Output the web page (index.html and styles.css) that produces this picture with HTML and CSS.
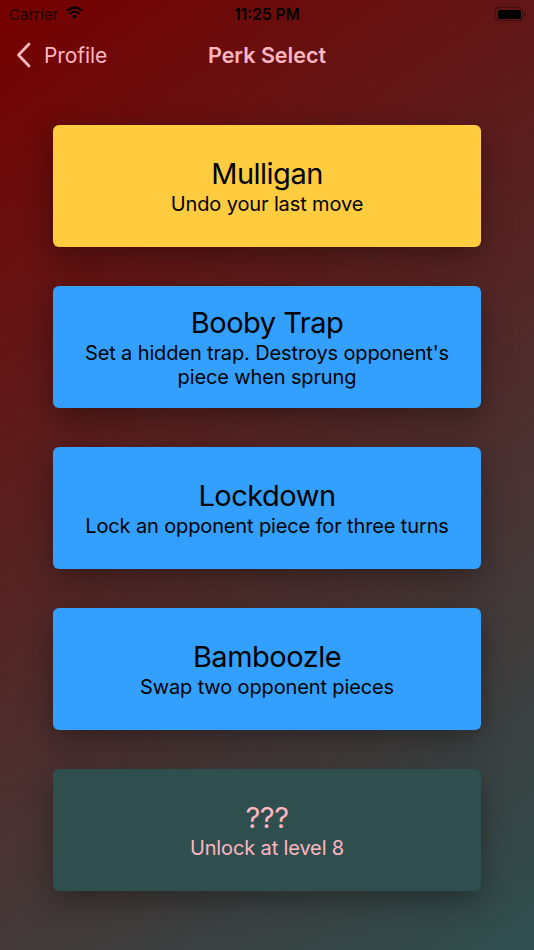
FILE: index.html
```html
<!DOCTYPE html>
<html lang="en">
<head>
<meta charset="utf-8">
<title>Perk Select</title>
<link rel="stylesheet" href="styles.css">
</head>
<body>
<div class="screen">
  <div class="status">
    <div class="status-left">
      <span class="carrier">Carrier</span>
      <svg class="wifi" width="19" height="14" viewBox="0 0 18 13"><path d="M9 2.400c2.500 0 4.800 1 6.500 2.600l1.300-1.300A11.200 11.200 0 0 0 9 .4 11.200 11.200 0 0 0 1.200 3.700L2.500 5A9.400 9.400 0 0 1 9 2.400z"/><path d="M9 6.300c1.500 0 2.800.6 3.800 1.500l1.300-1.300A7.400 7.400 0 0 0 9 4.400c-2 0-3.700.8-5.100 2.100l1.300 1.300c1-.9 2.300-1.500 3.800-1.500z"/><path d="M9 8.300c-1 0-1.800.4-2.400 1L9 12.200l2.400-2.900c-.6-.6-1.400-1-2.400-1z"/></svg>
    </div>
    <span class="time">11:25 PM</span>
    <div class="battery"><span class="battery-body"><span class="battery-fill"></span></span><span class="battery-tip"></span></div>
  </div>
  <header class="nav">
    <div class="back">
      <svg width="15" height="26" viewBox="0 0 15 26"><path d="M13 2 2.500 13 13 24" fill="none" stroke="#ffb6c1" stroke-width="2.800" stroke-linecap="round" stroke-linejoin="round"/></svg>
      <span>Profile</span>
    </div>
    <h1>Perk Select</h1>
  </header>
  <main class="list">
    <div class="card gold"><div class="name">Mulligan</div><div class="desc">Undo your last move</div></div>
    <div class="card blue"><div class="name">Booby Trap</div><div class="desc">Set a hidden trap. Destroys opponent's<br>piece when sprung</div></div>
    <div class="card blue"><div class="name">Lockdown</div><div class="desc">Lock an opponent piece for three turns</div></div>
    <div class="card blue"><div class="name">Bamboozle</div><div class="desc">Swap two opponent pieces</div></div>
    <div class="card locked"><div class="name">???</div><div class="desc">Unlock at level 8</div></div>
  </main>
</div>
</body>
</html>
```
FILE: styles.css
```css
* { box-sizing: border-box; }
html, body { margin: 0; padding: 0; }
body { width: 534px; height: 950px; overflow: hidden; font-family: Inter, "Liberation Sans", sans-serif; }
.screen { width: 534px; height: 950px; background: linear-gradient(145deg, #760000 0%, #2f4f4f 100%); display: flex; flex-direction: column; }
.status { height: 28px; position: relative; display: flex; align-items: center; justify-content: space-between; padding: 0 8px 0 9px; color: #000; }
.status-left { display: flex; align-items: center; gap: 7px; }
.carrier { font-size: 15px; color: #200000; }
.wifi { margin-top: -3px; }
.time { position: absolute; left: 0; right: 0; text-align: center; font-size: 15.500px; font-weight: 600; }
.battery { display: flex; align-items: center; }
.battery-body { width: 28px; height: 14px; border: 1px solid rgba(0,0,0,.35); border-radius: 4px; padding: 1.500px; display: block; }
.battery-fill { display: block; height: 100%; background: #000; border-radius: 2px; }
.battery-tip { width: 2px; height: 4px; background: rgba(0,0,0,.4); border-radius: 0 2px 2px 0; margin-left: 1px; }
.nav { height: 54px; position: relative; display: flex; align-items: center; justify-content: center; color: #ffb6c1; }
.back { position: absolute; left: 16px; top: 0; bottom: 0; display: flex; align-items: center; gap: 13px; font-size: 21px; letter-spacing: -.1px; }
.nav h1 { margin: 0; font-size: 21.500px; font-weight: 600; }
.list { display: flex; flex-direction: column; gap: 39px; padding: 43px 53.400px 0; }
.card { height: 122px; border-radius: 6px; display: flex; flex-direction: column; align-items: center; justify-content: center; text-align: center; box-shadow: 0 10px 30px rgba(0,0,0,.35); color: #000; }
.gold { background: #ffcc40; }
.blue { background: #33a0ff; }
.locked { background: #2f4f4f; color: #ffb6c1; }
.name { font-size: 29px; line-height: 36px; letter-spacing: -.5px; }
.desc { font-size: 20px; line-height: 24px; letter-spacing: -.13px; }
```
